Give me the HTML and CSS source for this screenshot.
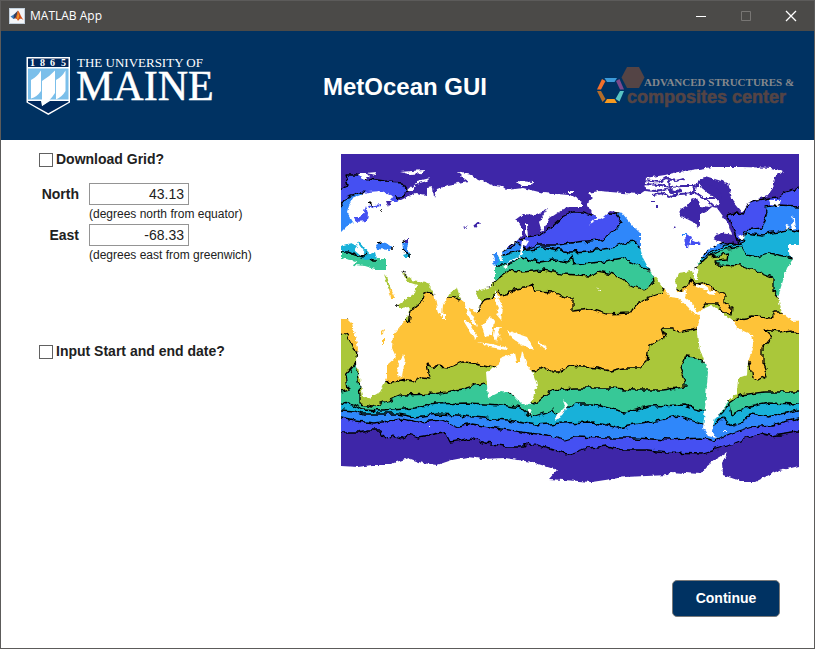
FILE: index.html
```html
<!DOCTYPE html>
<html lang="en">
<head>
<meta charset="utf-8">
<title>MATLAB App</title>
<link rel="stylesheet" href="styles.css">
</head>
<body>
<div class="window">
  <div class="titlebar">
    <svg class="app-icon" viewBox="0 0 16 16" aria-hidden="true">
      <rect x=".5" y=".5" width="15" height="15" fill="#f4f6f8" stroke="#c3d0dc"/>
      <path d="M1.500 8.500 5 6.500 7 8 4.500 11z" fill="#3d7fc0"/>
      <path d="M5 6.500 9 2.500 7.500 9.500 4.500 11z" fill="#35405c"/>
      <path d="M9 2.500C10.500 4 11.500 8 14.500 12 12 10.500 11 10 9 13 8 10.500 6.500 10 5.500 11 7.500 9 8 5 9 2.500z" fill="#d2501c"/>
      <path d="M9 3.500 10 8 9 12 8 10z" fill="#f0a02c"/>
    </svg>
    <span class="titlebar-text">MATLAB App</span>
    <div class="controls">
      <button type="button" aria-label="Minimize"><svg viewBox="0 0 10 10"><path d="M0 5.500h10"/></svg></button>
      <button type="button" aria-label="Maximize" disabled><svg viewBox="0 0 10 10"><path d="M.5.5h9v9h-9z"/></svg></button>
      <button type="button" aria-label="Close"><svg viewBox="0 0 10 10"><path class="cross" d="M0 0l10 10M10 0 0 10"/></svg></button>
    </div>
  </div>

  <header class="banner">
    <svg class="logo-maine" viewBox="26 56 188 60" role="img" aria-label="The University of Maine">
      <path d="M26.500 57h43.500v45.500L48.300 115 26.500 102.500z" fill="#fff"/>
      <path d="M28 58.500h40.500V67H28z" fill="#00285c"/>
      <path d="M28 68.500h40.500V99.500H28z" fill="#7bbfea"/>
      <path d="M28 101h13l1 5 8-5h18.500v1L48.300 113.200 28 102z" fill="#00285c"/>
      <path d="M31 80Q37 77 41 70.500V91Q37 97 31 98.500zM42 81Q49 77 55 70.500V93Q50 101 42 106zM56 80Q62 77 65.500 70.500V91Q62 97 56 99.500z" fill="#fff"/>
      <text class="maine-year" x="30 40 50 61" y="66">1865</text>
      <text class="maine-small" x="77" y="67">THE UNIVERSITY OF</text>
      <text class="maine-big" x="76" y="100">MAINE</text>
    </svg>
    <h1>MetOcean GUI</h1>
    <svg class="logo-ascc" viewBox="597 64 187 40" role="img" aria-label="Advanced Structures and Composites Center">
      <path d="M627 65h12l5.500 10.500L639 86h-12l-5.500-10.500z" fill="#544445"/>
      <path d="M604.500 76h12.500l-2.500 4h-7.500z" fill="#3c9bd9"/>
      <path d="M602 77l3.500 2-4.500 8.500h-4z" fill="#f3702b"/>
      <path d="M619.500 77 624 87.500h-4L616 79z" fill="#7b4a8c"/>
      <path d="M597 89h4l4.500 8-3 3z" fill="#b26d2b"/>
      <path d="M620 89h4l-4.500 10.500-4-2.500z" fill="#58c4c4"/>
      <path d="M607 97h7.500l2.500 4h-12.500z" fill="#f79a1f"/>
      <text class="ascc-top" x="644" y="84">ADVANCED STRUCTURES &amp;</text>
      <text class="ascc-bottom" x="627" y="101">composites center</text>
    </svg>
  </header>

  <main>
    <form class="form">
      <label class="check"><input type="checkbox">Download Grid?</label>
      <div class="fields">
        <label for="north">North</label>
        <input id="north" type="text" value="43.13" aria-describedby="north-hint">
        <small id="north-hint">(degrees north from equator)</small>
        <label for="east">East</label>
        <input id="east" type="text" value="-68.33" aria-describedby="east-hint">
        <small id="east-hint">(degrees east from greenwich)</small>
      </div>
      <label class="check"><input type="checkbox">Input Start and end date?</label>
    </form>

    <svg class="map" viewBox="341 154 458 330" role="img" aria-label="World map of ocean temperature bands">
      <defs>
        <clipPath id="frame"><rect x="341" y="154" width="458" height="330"/></clipPath>
        <filter id="rough" filterUnits="userSpaceOnUse" x="325" y="140" width="490" height="360" color-interpolation-filters="sRGB">
          <feTurbulence type="fractalNoise" baseFrequency=".14" numOctaves="2" seed="7"/>
          <feDisplacementMap in="SourceGraphic" scale="7" xChannelSelector="R" yChannelSelector="G"/>
        </filter>
        <filter id="coast" filterUnits="userSpaceOnUse" x="325" y="140" width="490" height="360" color-interpolation-filters="sRGB">
          <feTurbulence type="fractalNoise" baseFrequency=".25" numOctaves="3" seed="3"/>
          <feDisplacementMap in="SourceGraphic" scale="4" xChannelSelector="R" yChannelSelector="G"/>
        </filter>
      </defs>
      <g clip-path="url(#frame)">
        <rect x="341" y="154" width="458" height="330" fill="#3e26a8"/>
        <g class="bands" filter="url(#rough)">
          <path fill="#4550f2" d="M325 190 341 188 348 185 345 175 357 175 368 180 385 182 402 183 407 190 402 197 395 197 420 225 490 252 508 245 515 242 527 237 540 235 553 225 562 217 572 212 583 212 598 217 610 213 640 215 700 248 738 244 733 228 727 215 735 213 745 214 748 203 768 198 778 197 785 192 799 188 815 187V432L799 432 772 436 760 433 735 443 715 449 702 453 668 452 648 450 622 450 607 446 588 448 568 454 542 447 529 442 525 446 505 446 485 443 472 438 463 440 450 442 445 432 435 434 418 437 410 434 402 438 393 435 385 439 380 430 368 430 360 432 341 432 325 432z"/>
          <path fill="#2f87fa" d="M325 215 341 207 348 197 363 192 366 198 380 215 480 250 495 254 518 243 525 250 537 245 557 245 577 242 600 240 613 232 622 223 615 213 622 211 650 230 695 253 705 252 717 243 735 245 742 240 745 230 762 228 768 212 765 207 778 205 799 206 815 206V418L799 418 772 425 752 427 732 433 713 441 702 438 668 440 635 438 602 438 575 437 565 440 548 435 528 433 495 428 472 424 458 427 442 420 418 422 402 419 375 423 355 421 341 418 325 417z"/>
          <path fill="#18b1d9" d="M325 252 480 254 500 255 520 251 537 249 543 247 570 252 590 251 610 248 623 243 637 242 640 248 647 255 700 258 707 255 725 246 742 244 746 233 762 235 778 232 787 230 799 233 815 233V410L799 410 768 417 750 414 742 423 733 426 722 418 714 425 702 424 678 416 652 422 618 428 592 422 562 423 535 425 508 420 482 418 458 415 438 414 415 417 398 414 362 414 355 411 341 410 325 410z"/>
          <path fill="#37c897" d="M325 260 480 266 503 266 520 258 540 262 553 260 568 262 572 256 574 265 600 262 623 258 637 265 650 271 695 262 703 260 725 249 742 247 747 255 755 257 768 253 795 258 815 260V404L799 404 768 403 745 408 732 415 730 403 722 414 703 410 685 405 648 406 625 412 592 404 575 404 557 414 552 410 532 417 522 408 502 405 468 403 435 404 415 408 382 411 362 410 353 405 341 403 325 402z"/>
          <path fill="#aac73a" d="M325 270 470 270 490 286 500 277 510 270 523 272 543 270 563 274 590 276 597 271 613 274 627 283 643 290 653 283 652 275 685 266 697 267 707 257 717 256 728 254 727 260 715 261 717 265 742 266 758 272 773 278 773 290 780 298 815 300V392L799 392 765 392 740 395 730 402 715 385 708 365 695 358 685 357 680 368 685 382 685 387 662 390 635 390 612 388 575 388 552 390 535 403 505 390 483 383 462 389 435 394 402 395 382 403 372 407 360 405 360 396 356 363 346 375 348 390 341 392 325 392z"/>
          <path fill="#fec338" d="M325 317 393 318 405 320 409 323 411 312 415 307 423 300 425 293 430 292 447 296 453 296 459 300 464 298 477 312 483 300 493 298 497 289 500 295 512 293 515 288 533 286 535 291 553 292 565 298 573 298 573 311 590 309 605 314 630 313 637 304 650 297 662 293 665 286 680 291 688 285 690 278 695 285 707 283 713 289 725 295 725 303 733 308 732 315 723 312 717 304 705 304 702 308 715 320 733 320 752 317 772 318 775 312 782 312 815 312V334L799 333 792 330 778 332 765 330 772 337 763 348 763 362 768 375 758 381 752 378 750 365 740 340 698 328 678 332 672 328 662 328 665 337 649 345 647 362 640 368 623 368 610 371 597 368 570 366 560 372 553 372 543 367 535 372 510 370 488 367 472 363 463 362 448 368 435 367 427 363 430 378 422 377 412 382 402 380 393 382 383 381 366 372 357 356 352 345 347 335 341 333 325 333z"/>
          <path fill="#37c897" d="M403 271 407 278M476 291 484 288 493 280"/>
        </g>
        <g class="land" filter="url(#coast)">
          <path d="M325 235 341 232 347 226 353 222 347 212 349 205 353 198 368 192 382 191 393 196 390 200 397 202 405 198 415 193 427 195 427 188 433 187 434 198 437 189 448 185 468 181 462 177 457 172 472 175 478 180 485 182 495 186 503 187 507 190 523 188 543 193 570 195 582 202 582 207 568 207 562 210 550 218 542 232 539 222 548 208 540 212 537 215 523 214 515 220 522 225 522 235 515 243 508 247 502 252 503 260 500 260 497 255 492 253 497 260 495 268 495 280 490 287 477 291 476 295 482 302 477 313 468 307 475 320 477 327 468 317 465 305 460 297 457 288 450 293 443 305 442 317 438 313 434 293 427 282 412 280 403 273 408 282 417 285 415 293 398 305 399 308 410 307 407 318 393 335 392 348 396 357 387 365 387 378 380 392 368 399 363 397 360 378 356 363 358 348 352 323 347 318 341 319 325 319z"/>
          <path d="M587 193 600 191 623 193 640 194 646 190 645 178 665 175 678 172 712 167 742 167 772 168 783 171 775 177 773 188 768 195 748 203 742 213 733 202 728 183 705 176 700 180 702 188 718 198 720 205 708 206 717 208 728 223 732 235 722 233 714 240 722 242 705 252 697 267 698 280 695 280 692 271 678 273 675 280 677 292 682 293 687 288 685 297 692 303 698 312 705 308 712 305 725 315 733 320 737 328 752 335 754 345 748 362 747 375 738 378 737 392 727 403 724 409 715 418 712 430 716 438 708 436 703 428 705 408 708 372 698 343 697 332 700 315 693 313 688 307 678 298 670 297 664 289 658 280 650 271 643 258 640 248 640 233 632 225 622 213 610 211 603 217 588 225 597 217 590 210 587 203 593 198z"/>
          <path d="M815 242 799 245 788 245 788 253 793 259 787 268 780 290 778 298 782 313 792 321 815 320z"/>
          <path d="M486 372 497 366 503 357 515 353 517 362 520 362 522 351 527 365 533 373 537 385 533 398 530 405 522 404 515 397 512 393 502 391 488 398 487 385z"/>
          <path d="M403 354 405 360 402 377 397 375 398 363zM563 399 568 405 557 421 554 418 565 407zM527 409h5l-2 5zM463 320 468 322 477 336 475 340zM477 342 492 344 508 348 506 350 490 347zM482 327 490 316 494 321 492 335 485 337zM495 328 501 327 498 332 502 340 498 335 496 342 494 335zM507 330 515 333 527 337 534 350 520 344 512 338zM495 290 498 296 503 309 501 320 496 314 499 308 495 300zM443 314h3v5h-3z"/>
          <path d="M522 239 529 241 526 246 523 245 523 254 515 260 508 263 507 269 503 267 510 261 520 255zM525 223l2 1 1 14-3-5zM769 200 781 200 779 206 771 205zM792 214 795 220 796 229 791 230 793 221zM786 224l4 1-2 5-3-1zM357 173 366 173 370 177 364 180zM366 173 377 172 376 175zM400 172 424 170 423 173 410 174zM407 191 418 181 430 178 427 181 416 184 412 191zM516 181 533 182 532 186 521 186zM569 191h5v2h-5zM738 236l5-2 1 5-3 1zM537 341l10 6-1 2-9-5z"/>
          <path d="M696 284l10 2 4 3-5 0-10-3zM708 290l8 2-1 3-9-1z"/>
          <path d="M325 466 341 466 358 467 372 465 388 465 408 458 422 463 437 465 452 460 468 457 482 459 505 458 532 462 557 470 549 479 592 482 625 477 668 475 670 472 700 474 706 467 715 460 727 453 722 463 723 475 743 482 755 482 775 472 799 466 815 466V500H325z"/>
          <path d="M428 426h2v1h-2zM723 431h4v1h-4zM596 287l5 3 0 2-3-3z"/>
        </g>
        <g filter="url(#coast)">
          <path fill="#3e26a8" d="M678 213 684 207 688 205 692 198 697 199 700 206 712 207 706 212 700 215 700 223 698 229 695 223 683 217z"/>
          <path fill="none" stroke="#3e26a8" stroke-width="2" d="M645 180l14 2 7-4 10 3 8-2M642 184l19 1 9 2 12-1 16 0M645 190l10 1 12-2 7 3 8-1M653 195l10-2 8 4 8-3M668 177l3 14 5 5 5-7M680 194l16-1 8 5 10 0M705 199l8 6M701 181l-6 5-2 8"/>
          <path fill="#3e26a8" d="M698 180l8 4 10 3 6 8-2 5-10-5-9-8zM716 235l8-3 1 3-8 5-4-1zM656 205h2v3h-2zM673 226l3 1-2 2zM651 201h4v1h-4zM474 225l4-3 2 1-4 5zM463 227l5-1-3 2zM386 201l7 0-5 5zM405 239h3v4h-3z"/>
          <path fill="#4550f2" d="M366 206 368 214 367 221 356 222 354 217 361 217 364 212zM368 206l13-2v2l-12 2zM685 233l6 4-3 11-2 0zM692 239l9 4-1 2-10 0z"/>
          <path fill="#2f87fa" d="M376 245 381 242 386 243 393 248 390 250 377 249zM402 241l7 2-2 5 2 6-2 3-4-8zM682 233h5v2h-5zM493 253l4 0 1 10-4 3-1-4 2-3z"/>
          <path fill="#18b1d9" d="M341 246 351 243 357 246 354 250 361 256 366 254 357 242 359 241 370 254 375 252 377 260 366 261 355 258 341 257zM403 255l6-2 1 5-5 0z"/>
          <path fill="#37c897" d="M341 252 348 253 357 256 365 260 374 259 386 259 386 269 375 269 365 266 354 265 356 261 341 258z"/>
          <path class="dots" d="M341 252 348 252 355 255 362 257 367 253M370 259l3 2 4 0M378 243l4-1M391 248h3M402 242l3-2M403 249l4 5M409 254v4M369 203l2 1 0 2M381 211h1M697 266l-2 3M403 271l2 2M390 290l2 3M396 306h3"/>
          <path fill="#aac73a" d="M384 274 388 279 391 290 389 290z"/>
          <path fill="#fec338" d="M389 290 392 290 395 298 391 298zM381 331l3-2-1 5-2 1zM383 338h1v7h-1z"/>
        </g>
      </g>
    </svg>
  </main>

  <footer><button class="continue" type="button">Continue</button></footer>
</div>
</body>
</html>
```

FILE: styles.css
```css
* { box-sizing: border-box; }

body {
  margin: 0;
  font: 14px/16px "Liberation Sans", Arial, sans-serif;
  color: #212121;
  background: #fff;
}

.window {
  display: flex;
  flex-direction: column;
  min-height: 100vh;
  border: 1px solid #5c5b5a;
}

.titlebar {
  display: flex;
  align-items: center;
  height: 30px;
  padding: 0 1px 0 8px;
  background: #4b4a48;
  color: #fff;
  font: 12px/16px "Open Sans", "Noto Sans", sans-serif;
}

.app-icon { width: 16px; height: 16px; margin-right: 5px; }

.controls { display: flex; margin-left: auto; }

.controls button {
  display: grid;
  place-items: center;
  width: 45px;
  height: 28px;
  padding: 0;
  border: 0;
  background: none;
}

.controls svg {
  width: 10px;
  height: 10px;
  overflow: visible;
  fill: none;
  stroke: #fff;
}

.controls .cross { stroke-width: 1.3; }
.controls button:disabled svg { stroke: #787674; }

.banner {
  display: grid;
  grid-template-columns: 1fr auto 1fr;
  align-items: center;
  height: 109px;
  padding: 0 30px 0 25px;
  background: #003262;
}

.banner h1 {
  margin: 0;
  padding-top: 2px;
  color: #fff;
  font-size: 24px;
  line-height: 28px;
}

.logo-maine { width: 188px; height: 60px; overflow: visible; }
.logo-ascc { width: 187px; height: 40px; overflow: visible; justify-self: end; }

.maine-year, .maine-small, .maine-big { font-family: "Liberation Serif", serif; fill: #fff; }
.maine-year { font-size: 10px; font-weight: bold; }
.maine-small { font-size: 13px; }
.maine-big { font-size: 42px; stroke: #fff; stroke-width: .5; }

.ascc-top { font: bold 11px "Liberation Serif", serif; fill: #85888c; }
.ascc-bottom { font: bold 18px "Liberation Sans", sans-serif; fill: #544445; stroke: #544445; stroke-width: .6; }

main {
  display: grid;
  grid-template-columns: 302px 1fr;
  align-items: start;
  padding: 14px 15px 0 38px;
}

.form { display: grid; justify-items: start; }

.check {
  display: flex;
  align-items: center;
  gap: 3px;
  height: 10px;
  font-weight: bold;
}

.check input {
  appearance: none;
  width: 14px;
  height: 14px;
  margin: 2px 0 0;
  border: 1px solid #616161;
  background: #fff;
}

.check input:checked { background: #003262; }

.fields {
  display: grid;
  grid-template-columns: 40px auto;
  column-gap: 10px;
  align-items: center;
  margin: 19px 0 81px;
}

.fields label { font-weight: bold; text-align: right; }

.fields input {
  width: 100px;
  height: 22px;
  padding: 0 4px;
  border: 1px solid #949494;
  font: inherit;
  color: #212121;
  text-align: right;
}

.fields small { grid-column: 2; font-size: 12px; line-height: 19px; }

.map { width: 100%; height: auto; display: block; }
.bands path { stroke: #000; stroke-width: 1.3; stroke-linejoin: round; }
.land { fill: #fff; }
.dots { fill: none; stroke: #000; stroke-width: 1.5; }

footer {
  display: flex;
  justify-content: flex-end;
  margin-top: auto;
  padding: 0 34px 31px;
}

.continue {
  width: 108px;
  height: 37px;
  padding: 0 0 2px;
  border: 1px solid #7a7a7a;
  border-radius: 5px;
  background: #003262;
  color: #fff;
  font: bold 14px/16px "Liberation Sans", Arial, sans-serif;
}
```
